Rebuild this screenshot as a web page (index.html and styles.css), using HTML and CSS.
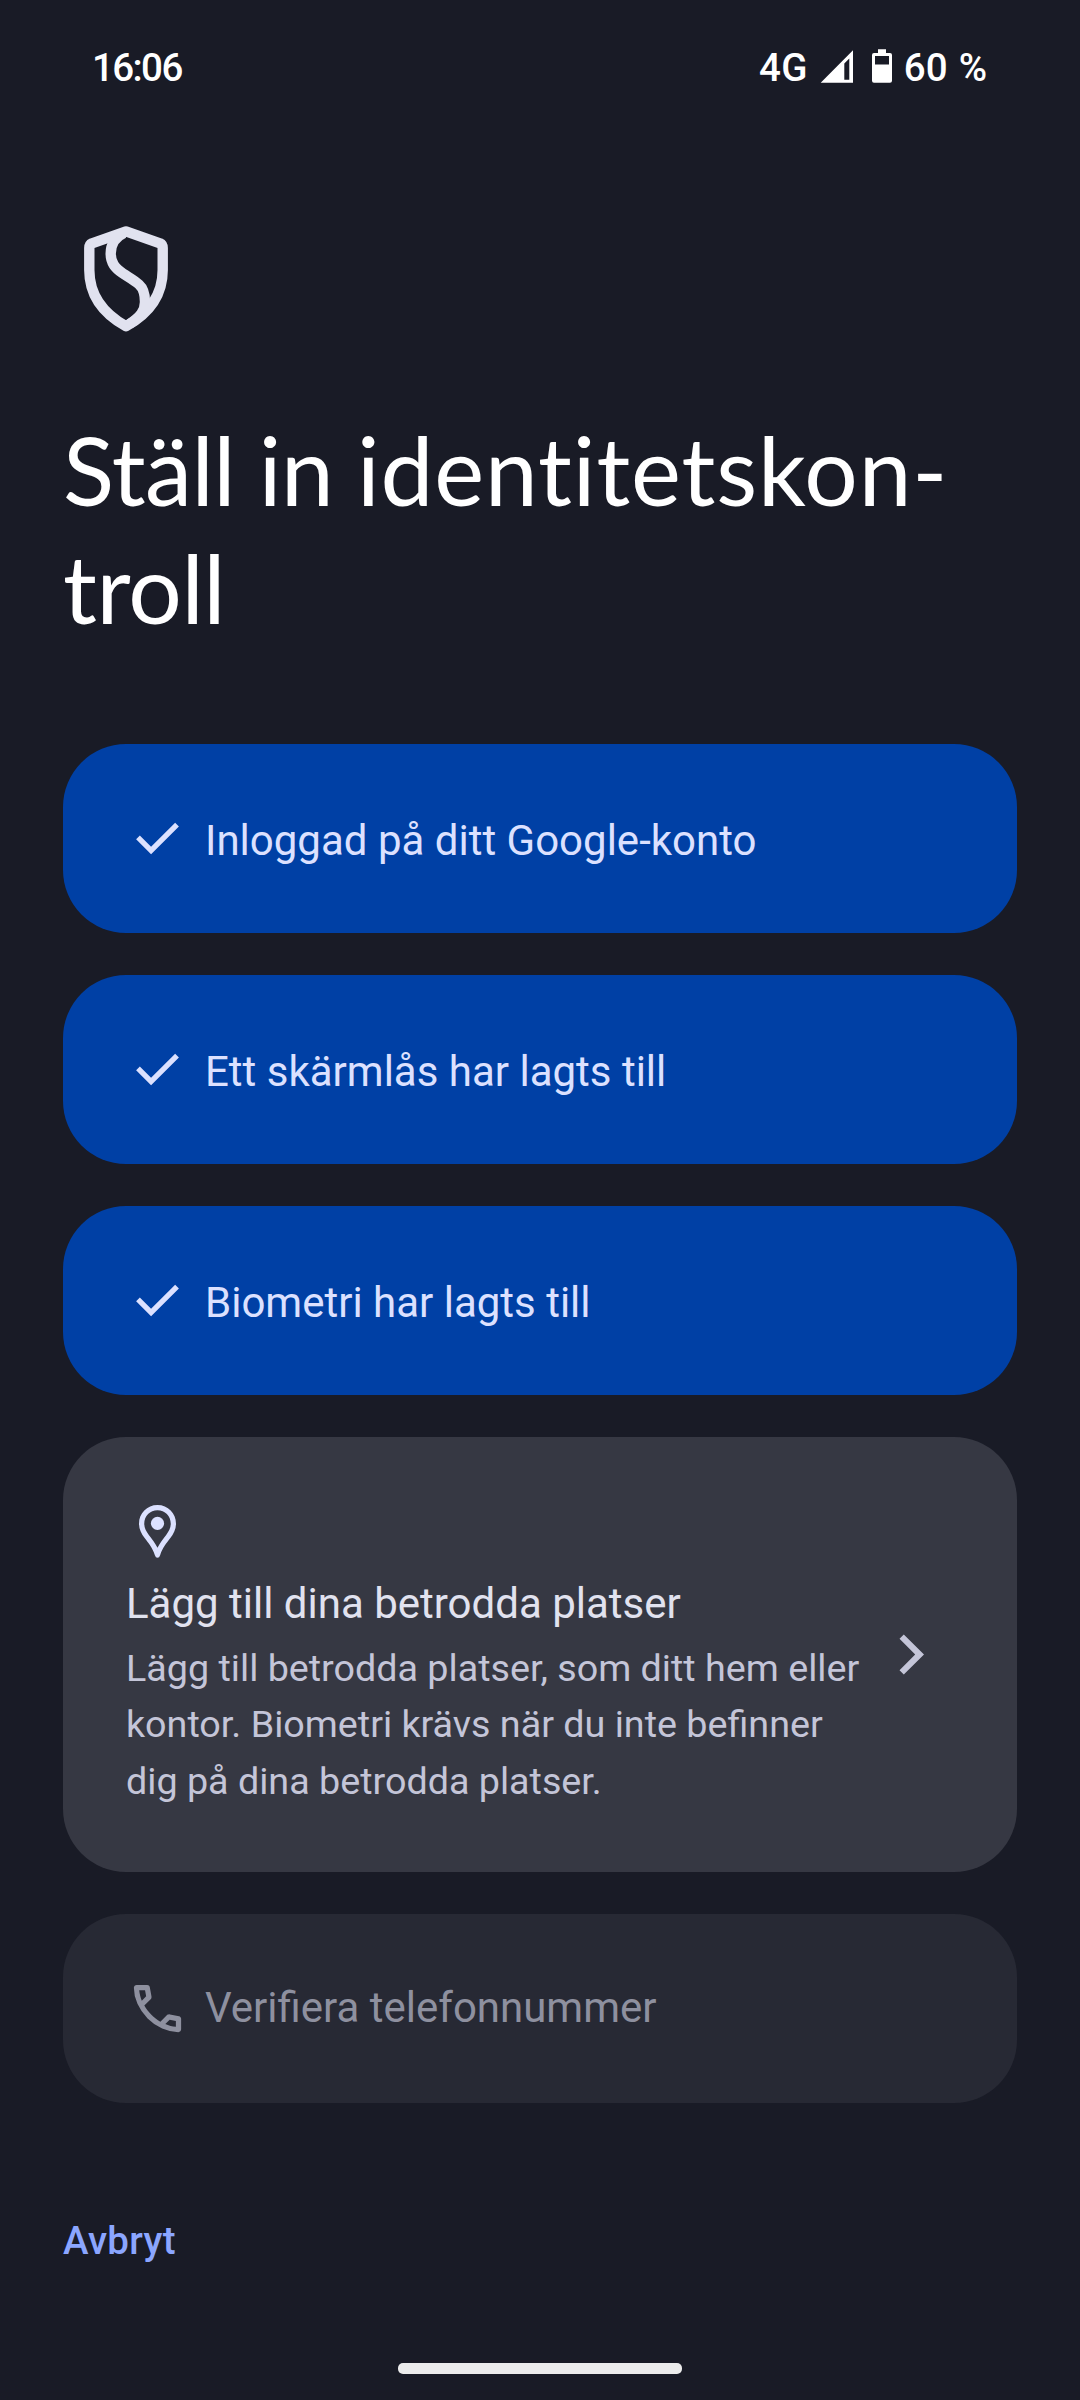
FILE: index.html
```html
<!DOCTYPE html>
<html lang="sv">
<head>
    <meta charset="UTF-8">
    <meta name="viewport" content="width=device-width, initial-scale=1.0">
    <title>Identitetskontroll</title>
    <link rel="stylesheet" href="styles.css">
</head>
<body>
    <div class="status-bar">
        <span class="clock">16:06</span>
        <div class="status-icons">
            <span class="network">4G</span>
            <svg class="signal" viewBox="0 0 33 33">
                <path fill-rule="evenodd" d="M0.7 32.7L33 0.3V32.7ZM24.3 13.5V29.7H29.3V8.5Z"/>
            </svg>
            <svg class="battery" viewBox="0 0 20 34">
                <path fill-rule="evenodd" d="M6 0.3H14V4H18Q20 4 20 6V31.7Q20 33.7 18 33.7H2Q0 33.7 0 31.7V6Q0 4 2 4H6ZM3 7V15.5H17V7Z"/>
            </svg>
            <span class="percent">60 %</span>
        </div>
    </div>
    <main class="container">
        <svg class="shield" viewBox="0 0 126 126">
            <path d="M63 15.4L29 27.3Q26.3 28.5 26.3 32V54C26.3 80 41 98 63 110.3C85 98 99.7 80 99.7 54V32Q99.7 28.5 97 27.3Z"/>
            <path d="M61 17C52 21 47.7 29 47.7 37.5C47.7 47 52 52 60 57.5C66 61.5 71 64 76 68.5C80 72 82 77 82 86C82 95 77 101 66.5 108"/>
        </svg>
        <h1>Ställ in <span class="wide">identitetskon-</span><br>troll</h1>
        <div class="steps">
            <div class="step done">
                <svg class="icon" viewBox="0 0 24 24"><path d="M9.55 18l-5.7-5.7 1.425-1.425L9.55 15.15l9.175-9.175L20.15 7.4z"/></svg>
                <span>Inloggad på ditt Google-konto</span>
            </div>
            <div class="step done">
                <svg class="icon" viewBox="0 0 24 24"><path d="M9.55 18l-5.7-5.7 1.425-1.425L9.55 15.15l9.175-9.175L20.15 7.4z"/></svg>
                <span>Ett skärmlås har lagts till</span>
            </div>
            <div class="step done">
                <svg class="icon" viewBox="0 0 24 24"><path d="M9.55 18l-5.7-5.7 1.425-1.425L9.55 15.15l9.175-9.175L20.15 7.4z"/></svg>
                <span>Biometri har lagts till</span>
            </div>
            <div class="step current">
                <div class="step-body">
                    <svg class="icon" viewBox="0 0 24 24">
                        <path fill-rule="evenodd" d="M12 1.9C8 1.9 4.95 5 4.95 9C4.95 11.2 5.9 12.9 7.1 14.5C8.7 16.7 10 18 11 21Q11.3 22 12 22Q12.7 22 13 21C14 18 15.3 16.7 16.9 14.5C18.1 12.9 19.05 11.2 19.05 9C19.05 5 16 1.9 12 1.9ZM12 18.2C11 16.2 9.9 14.9 8.7 13.3C7.7 11.9 6.95 10.7 6.95 9C6.95 6.1 9.2 3.9 12 3.9C14.8 3.9 17.05 6.1 17.05 9C17.05 10.7 16.3 11.9 15.3 13.3C14.1 14.9 13 16.2 12 18.2Z"/>
                        <circle cx="12" cy="8.9" r="2.5"/>
                    </svg>
                    <h2>Lägg till dina betrodda platser</h2>
                    <p>Lägg till betrodda platser, som ditt hem eller<br>kontor. Biometri krävs när du inte befinner<br>dig på dina betrodda platser.</p>
                </div>
                <svg class="chevron" viewBox="0 0 25 42"><path d="M4.8 0.5L0.5 4.8L16.2 20.5L0.5 36.2L4.8 40.5L25 20.5Z"/></svg>
            </div>
            <div class="step pending">
                <svg class="icon" viewBox="0 0 24 24"><path d="M19.95 21q-3.125 0-6.175-1.362t-5.55-3.863-3.862-5.55T3 4.05q0-.45.3-.75t.75-.3H8.1q.35 0 .625.238t.325.562l.65 3.5q.05.4-.025.675T9.4 8.45L6.975 10.9q.5.925 1.187 1.787t1.513 1.663q.775.775 1.625 1.438T13.1 17l2.35-2.35q.225-.225.588-.338t.712-.062l3.45.7q.35.1.575.363T21 15.9v4.05q0 .45-.3.75t-.75.3zM6.025 9l1.65-1.65L7.25 5H5.025q.125 1.025.35 2.025T6.025 9zm8.95 8.95q.975.425 1.988.675T19 18.95v-2.2l-2.35-.475z"/></svg>
                <span>Verifiera telefonnummer</span>
            </div>
        </div>
        <a class="cancel" href="#">Avbryt</a>
    </main>
    <div class="home-bar"></div>
</body>
</html>
```
FILE: styles.css
```css
* {
    margin: 0;
    padding: 0;
    box-sizing: border-box;
}

body {
    background-color: #191b26;
    color: #ffffff;
    height: 2400px;
    display: flex;
    flex-direction: column;
    font-family: Roboto, sans-serif;
}

svg {
    display: block;
    fill: currentColor;
    flex-shrink: 0;
}

.status-bar {
    height: 216px;
    padding: 46px 93px 0 92px;
    display: flex;
    justify-content: space-between;
    align-items: flex-start;
    font-weight: 500;
    font-size: 38.5px;
    line-height: 44px;
}

.clock {
    letter-spacing: -1.6px;
}

.status-icons {
    display: flex;
}

.network {
    letter-spacing: 0.4px;
}

.signal {
    width: 33px;
    height: 33px;
    margin: 4px 19px 0 12px;
}

.battery {
    width: 20px;
    height: 34px;
    margin: 3px 12px 0 0;
}

.percent {
    word-spacing: 1.5px;
}

.container {
    padding: 0 63px;
}

.shield {
    width: 126px;
    height: 126px;
    fill: none;
    stroke: #e1e2ef;
    stroke-width: 10.4;
    stroke-linejoin: round;
}

h1 {
    font-family: Lato, sans-serif;
    font-size: 94.5px;
    font-weight: 400;
    line-height: 118px;
    letter-spacing: -0.5px;
    margin-top: 69px;
    white-space: nowrap;
}

.wide {
    letter-spacing: 0.9px;
}

.steps {
    margin-top: 97px;
    display: flex;
    flex-direction: column;
    gap: 42px;
}

.step {
    border-radius: 63px;
    padding: 63px;
    display: flex;
    align-items: center;
    gap: 16px;
    font-size: 42px;
    line-height: 63px;
    white-space: nowrap;
}

.done {
    background-color: #0040a5;
    color: #dce1ff;
}

.done span {
    padding-top: 4px;
    line-height: 59px;
}

.current {
    height: 435px;
    background-color: #363843;
    gap: 37px;
}

.pending {
    background-color: #272934;
    color: #8e909f;
}

.pending span {
    line-height: 61px;
    padding-bottom: 2px;
}

.icon {
    width: 63px;
    height: 63px;
}

.step-body {
    width: 735px;
    color: #dce1ff;
}

h2 {
    font-size: 42px;
    font-weight: 400;
    line-height: 63px;
    margin-top: 9px;
    color: #e1e2ef;
}

p {
    font-size: 37.7px;
    line-height: 56.5px;
    padding-top: 5px;
    color: #c4c5d8;
}

.chevron {
    width: 25px;
    height: 42px;
    margin-left: 1px;
    color: #c4c5d8;
}

.cancel {
    display: inline-block;
    margin-top: 112px;
    font-size: 38.5px;
    font-weight: 500;
    line-height: 52px;
    letter-spacing: 0.3px;
    color: #8ba6ff;
    text-decoration: none;
}

.home-bar {
    width: 284px;
    height: 11px;
    margin: auto auto 26px;
    border-radius: 5px;
    background-color: #ececec;
}
```
